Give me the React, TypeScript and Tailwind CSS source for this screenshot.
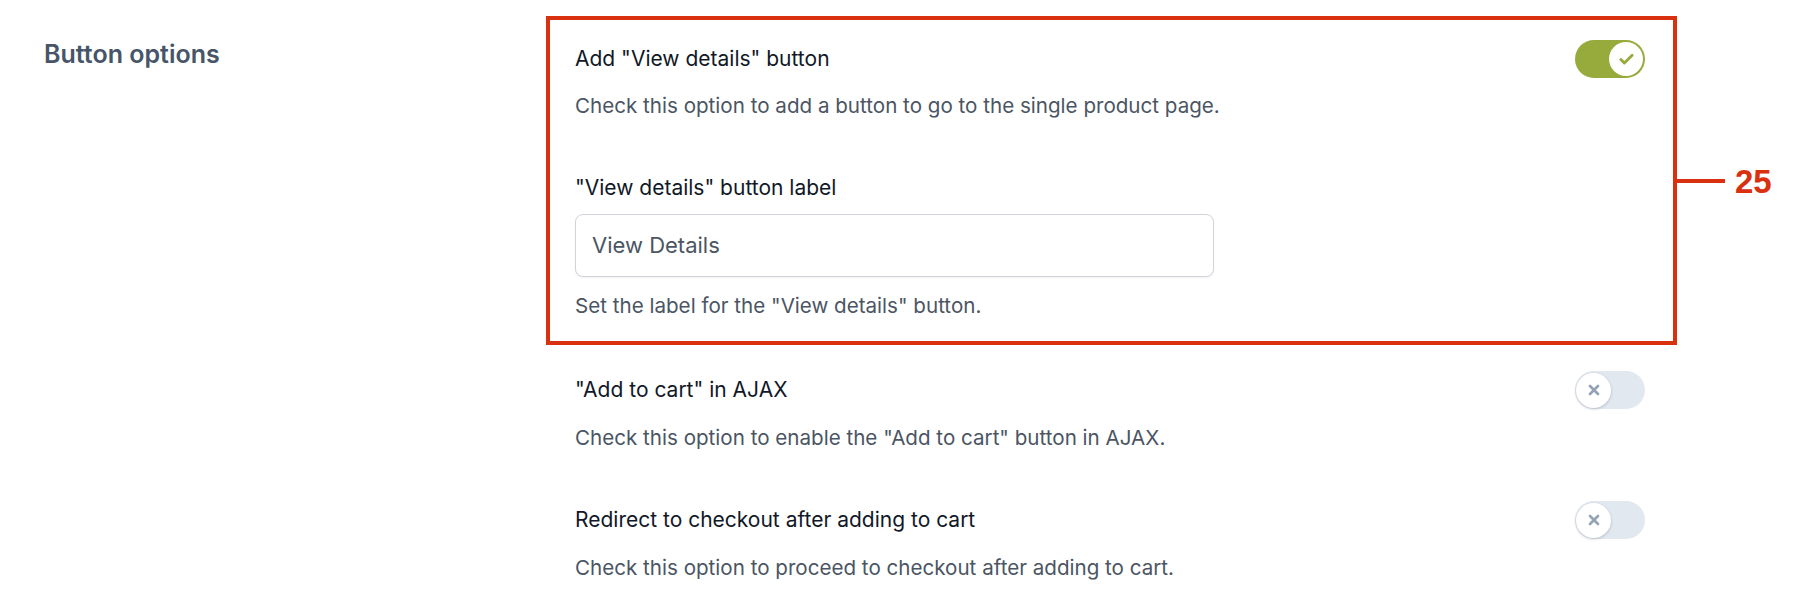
import { Check, X } from "lucide-react";

function Toggle({ on }: { on: boolean }) {
  if (on) {
    return (
      <div className="flex h-[38px] w-[70px] shrink-0 items-center justify-end rounded-full bg-[#97ab3c] px-[2px]">
        <div className="flex size-[34px] items-center justify-center rounded-full bg-white">
          <Check className="size-[17px] text-[#97ab3c]" strokeWidth={4} />
        </div>
      </div>
    );
  }
  return (
    <div className="flex h-[38px] w-[70px] shrink-0 items-center justify-start rounded-full bg-[#e2e8f0] px-[1px]">
      <div className="flex size-[35px] items-center justify-center rounded-full bg-white shadow-[0_1px_3px_rgba(15,23,42,0.22)]">
        <X className="size-[16px] text-[#94a3b8]" strokeWidth={4} />
      </div>
    </div>
  );
}

function OptionRow({ title, on }: { title: string; on: boolean }) {
  return (
    <div className="flex items-center justify-between">
      <span className="text-[21px] font-normal leading-[28px] text-[#111827]">{title}</span>
      <Toggle on={on} />
    </div>
  );
}

function Help({ children, className = "" }: { children: React.ReactNode; className?: string }) {
  return <p className={"text-[20.6px] leading-[28px] text-[#4b5563] " + className}>{children}</p>;
}

export default function App() {
  return (
    <div
      className="flex min-h-[614px] w-full bg-white"
      style={{ fontFamily: "Inter, 'Noto Sans', sans-serif" }}
    >
      {/* section label */}
      <div className="w-[546px] shrink-0 pl-[44px] pt-[38px]">
        <h2 className="text-[25px] font-semibold leading-[32px] text-[#475569]">Button options</h2>
      </div>

      {/* settings */}
      <div className="flex w-[1131px] flex-col pt-[16px]">
        {/* highlighted group */}
        <div className="relative border-4 border-[#d9300f] pb-[21px] pl-[25px] pr-[28px] pt-[20px]">
          <OptionRow title={'Add "View details" button'} on />
          <Help className="mt-[14px]">Check this option to add a button to go to the single product page.</Help>

          <label className="mt-[54px] block text-[21px] font-normal leading-[28px] text-[#111827]">
            "View details" button label
          </label>
          <div className="mt-[12px] flex h-[63px] w-[639px] items-center rounded-[8px] border border-[#d1d5db] bg-white pl-[16px] shadow-[0_1px_2px_rgba(15,23,42,0.06)]">
            <span className="text-[22px] text-[#4b5563]">View Details</span>
          </div>
          <Help className="mt-[15px]">Set the label for the "View details" button.</Help>

          {/* callout */}
          <div className="absolute left-[calc(100%+4px)] top-[145px] flex h-[32px] items-center gap-[10px]">
            <div className="h-[4px] w-[48px] bg-[#d9300f]" />
            <span
              className="text-[33px] font-bold leading-none text-[#d9300f]"
              style={{ fontFamily: "'Liberation Sans', Arial, sans-serif" }}
            >
              25
            </span>
          </div>
        </div>

        <div className="mt-[2px] border-4 border-transparent pb-[21px] pl-[25px] pr-[28px] pt-[20px]">
          <OptionRow title={'"Add to cart" in AJAX'} on={false} />
          <Help className="mt-[15px]">Check this option to enable the "Add to cart" button in AJAX.</Help>
        </div>

        <div className="border-4 border-transparent pb-[21px] pl-[25px] pr-[28px] pt-[20px]">
          <OptionRow title="Redirect to checkout after adding to cart" on={false} />
          <Help className="mt-[15px]">Check this option to proceed to checkout after adding to cart.</Help>
        </div>
      </div>
    </div>
  );
}
